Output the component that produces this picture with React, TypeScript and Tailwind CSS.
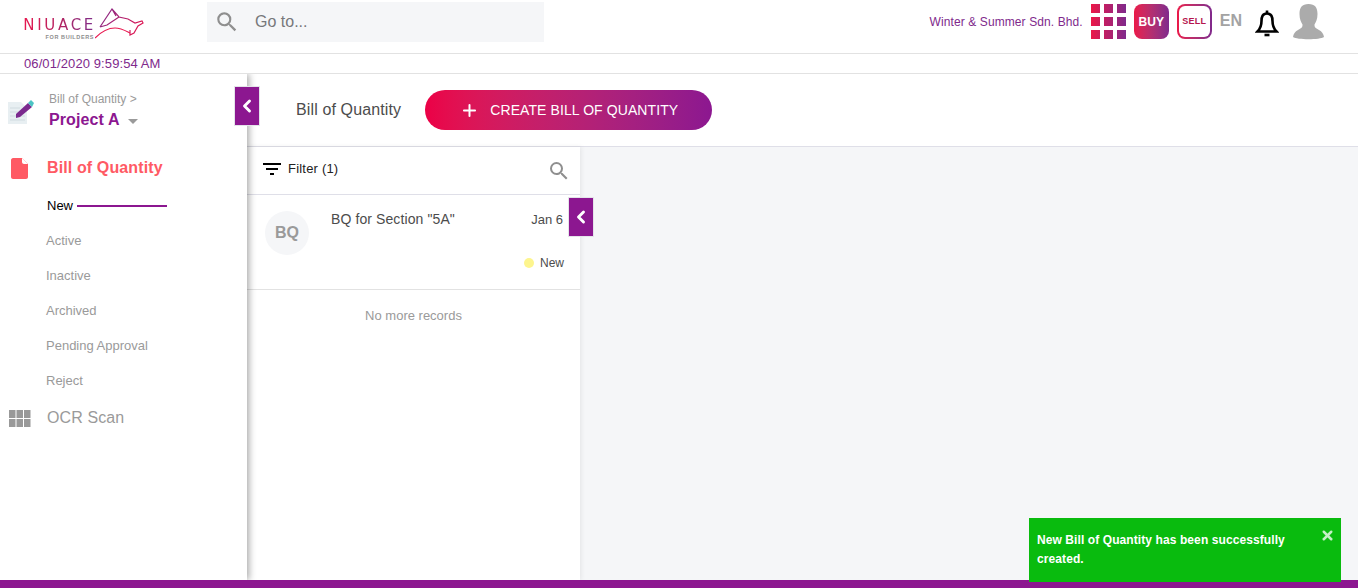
import { ChevronLeft, Plus, X } from "lucide-react";
import { MdSearch } from "react-icons/md";

const statuses = ["Active", "Inactive", "Archived", "Pending Approval", "Reject"];

function Logo() {
  return (
    <div className="flex items-start w-[120px] h-[40px] ml-[24px] mt-[8px]">
      <div className="flex flex-col items-end w-[70px] pt-[10px]">
        <span className="font-['DejaVu_Sans',sans-serif] text-[15px] leading-[14px] tracking-[2.7px] -mr-[2px] bg-gradient-to-r from-[#e8174f] via-[#b3205f] to-[#7d2a8c] bg-clip-text text-transparent">
          NIUACE
        </span>
        <span className="text-[5.5px] leading-[6px] mt-[2px] tracking-[0.6px] font-bold text-[#8d8d8d]">FOR BUILDERS</span>
      </div>
      <svg width="49" height="31" viewBox="0 0 49 31" fill="none" className="ml-[1px]">
        <defs>
          <linearGradient id="bull" gradientUnits="userSpaceOnUse" x1="5" y1="0" x2="45" y2="28">
            <stop offset="0" stopColor="#7d2a8c" />
            <stop offset="1" stopColor="#e8174f" />
          </linearGradient>
        </defs>
        <path d="M5 19 L17 1 L24 9 L33 11 L40 15 L47 13 L48 15 L43 18 L39 25 L35 27 L35 22 M24 9 L12 17 L5 19 M17 1 L21 8" stroke="url(#bull)" strokeWidth="1.2" />
        <path d="M0 30 C6 24 13 20 20 20 C26 20 31 23 35 25" stroke="#e8174f" strokeWidth="1.2" />
      </svg>
    </div>
  );
}

function GridIcon() {
  const cells = [0, 13, 26];
  return (
    <svg width="35" height="35" viewBox="0 0 35 35">
      <defs>
        <linearGradient id="grid" gradientUnits="userSpaceOnUse" x1="0" y1="0" x2="35" y2="0">
          <stop offset="0" stopColor="#eb1748" />
          <stop offset="1" stopColor="#80298c" />
        </linearGradient>
      </defs>
      {cells.map((y) =>
        cells.map((x) => <rect key={`${x}-${y}`} x={x} y={y} width="9" height="9" fill="url(#grid)" />)
      )}
    </svg>
  );
}

function BellIcon() {
  return (
    <svg width="24" height="27" viewBox="0 0 24 27" fill="none" stroke="#000" strokeWidth="2.6">
      <path d="M12 3.5 C7.5 3.5 6.5 7 6.5 11 C6.5 16 5 19 2.5 21.5 H21.5 C19 19 17.5 16 17.5 11 C17.5 7 16.5 3.5 12 3.5 Z" />
      <path d="M12 0.5 V3" />
      <path d="M9.5 25 H14.5" />
    </svg>
  );
}

function AvatarIcon() {
  return (
    <svg width="31" height="36" viewBox="0 0 31 36">
      <path
        d="M15.5 0 C22 0 24.5 3.5 24.5 10 C24.5 15 23 18 21.5 20.5 C21 23 23 24.5 26 26 C29 27.5 30.5 30 31 33 C27 36 4 36 0 33 C0.5 30 2 27.5 5 26 C8 24.5 10 23 9.5 20.5 C8 18 6.5 15 6.5 10 C6.5 3.5 9 0 15.5 0 Z"
        fill="#ababab"
      />
    </svg>
  );
}

function NoteIcon() {
  return (
    <svg width="27" height="27" viewBox="0 0 27 27">
      <path d="M1 3 H14 L20 9 V25 H1 Z" fill="#e8eff2" />
      <path d="M3 9 H13 M3 13 H15 M3 17 H18 M3 21 H18" stroke="#d0dbe0" strokeWidth="1" />
      <path d="M9 15 L21 4 L25 8 L13 18 L9 19 Z" fill="#7b2a8e" />
      <path d="M21 4 L24 1 L27 4 L25 8 Z" fill="#4cc4c4" />
    </svg>
  );
}

function FileIcon() {
  return (
    <svg width="17" height="21" viewBox="0 0 17 21">
      <path d="M2 0 H11 L17 6 V19 C17 20 16 21 15 21 H2 C1 21 0 20 0 19 V2 C0 1 1 0 2 0 Z" fill="#ff5a64" />
      <path d="M11 0 V4 C11 5 12 6 13 6 H17 Z" fill="#ffffff" />
    </svg>
  );
}

function OcrIcon() {
  const cols = [0, 7.5, 15];
  return (
    <svg width="22" height="17" viewBox="0 0 22 17">
      {[0, 9].map((y) => cols.map((x) => <rect key={`${x}-${y}`} x={x} y={y} width="6.5" height="8" fill="#999" />))}
    </svg>
  );
}

function FilterIcon() {
  return (
    <svg width="18" height="12" viewBox="0 0 18 12">
      <rect x="0" y="0" width="18" height="2" fill="#000" />
      <rect x="3" y="5" width="12" height="2" fill="#000" />
      <rect x="7" y="10" width="4" height="2" fill="#000" />
    </svg>
  );
}

function CollapseTab({ className }: { className: string }) {
  return (
    <button className={`absolute z-20 w-[26px] h-[40px] flex items-center justify-center bg-[#8c1790] border border-[#e4e4ea] ${className}`}>
      <ChevronLeft size={20} strokeWidth={3.5} color="#fff" />
    </button>
  );
}

export default function App() {
  return (
    <div className="relative w-[1358px] h-[588px] overflow-hidden bg-white font-['Liberation_Sans',Arial,sans-serif]">
      <header className="h-[54px] flex border-b border-[#e2e2e2]">
        <Logo />
        <div className="ml-[63px] mt-[2px] w-[337px] h-[40px] bg-[#f5f6f8] flex items-center pl-[7px]">
          <MdSearch size={26} color="#8f8f8f" />
          <span className="ml-[15px] text-[16px] text-[#77787b]">Go to...</span>
        </div>
        <div className="ml-auto flex items-start pt-[4px] pr-[34px]">
          <span className="text-[12px] leading-[14px] mt-[11px] mr-[8px] tracking-[0.1px] text-[#80298c]">Winter &amp; Summer Sdn. Bhd.</span>
          <GridIcon />
          <div className="ml-[8px] w-[35px] h-[35px] rounded-[8px] bg-gradient-to-r from-[#eb1748] to-[#80298c] flex items-center justify-center text-[12px] font-bold text-white">
            BUY
          </div>
          <div className="ml-[8px] w-[35px] h-[35px] rounded-[8px] p-[2px] bg-gradient-to-r from-[#eb1748] to-[#80298c]">
            <div className="w-full h-full rounded-[6px] bg-white flex items-center justify-center text-[9px] font-bold tracking-[0.2px] text-[#b5154f]">
              SELL
            </div>
          </div>
          <span className="ml-[8px] mt-[8px] text-[16px] leading-[18px] font-bold text-[#a3a3a3]">EN</span>
          <div className="ml-[13px] mt-[6px]">
            <BellIcon />
          </div>
          <div className="ml-[14px]">
            <AvatarIcon />
          </div>
        </div>
      </header>

      <div className="h-[20px] pl-[24px] border-b border-[#e2e2e2] text-[13px] leading-[19px] tracking-[0.1px] text-[#80298c]">
        06/01/2020 9:59:54 AM
      </div>

      <div className="flex h-[506px] overflow-hidden">
        <aside className="relative z-10 w-[247px] shrink-0 bg-white shadow-[2px_0_7px_rgba(0,0,0,0.35)]">
          <div className="flex pt-[18px] pl-[7px]">
            <div className="mt-[7px]">
              <NoteIcon />
            </div>
            <div className="ml-[15px]">
              <div className="text-[12px] leading-[14px] text-[#9a9a9a]">Bill of Quantity &gt;</div>
              <div className="flex items-center mt-[5px] text-[16px] leading-[18px] tracking-[0.1px] font-bold text-[#8c1790]">
                Project A
                <span className="ml-[8px] mt-[2px] w-0 h-0 border-x-[5px] border-x-transparent border-t-[5px] border-t-[#9a9a9a]" />
              </div>
            </div>
          </div>
          <div className="flex items-center mt-[28px] pl-[11px] h-[22px]">
            <FileIcon />
            <span className="ml-[19px] text-[16px] tracking-[0.12px] font-bold text-[#ff5a64]">Bill of Quantity</span>
          </div>
          <div className="pl-[46px] mt-[19px] flex flex-col text-[13px]">
            <div className="h-[35px] flex items-start pl-[1px]">
              <span className="leading-[16px] text-black">New</span>
              <span className="ml-[4px] mt-[7px] w-[90px] h-[2px] bg-[#8c1790]" />
            </div>
            {statuses.map((s) => (
              <div key={s} className="h-[35px] leading-[16px] text-[#9a9a9a]">
                {s}
              </div>
            ))}
          </div>
          <div className="flex items-center pl-[9px]">
            <OcrIcon />
            <span className="ml-[16px] text-[16px] leading-[20px] tracking-[0.1px] text-[#9a9a9a]">OCR Scan</span>
          </div>
        </aside>

        <main className="flex-1 flex flex-col bg-[#f5f6f8]">
          <div className="h-[73px] shrink-0 bg-white border-b border-[#dfdfe8] flex items-center pl-[49px]">
            <span className="text-[16px] tracking-[0.13px] text-[#4c4c4c]">Bill of Quantity</span>
            <button className="ml-[24px] w-[287px] h-[40px] rounded-full bg-gradient-to-r from-[#ec0046] to-[#8c1790] flex items-center pl-[35px] text-white">
              <Plus size={19} strokeWidth={2.5} />
              <span className="ml-[11px] text-[14px] tracking-[0.09px]">CREATE BILL OF QUANTITY</span>
            </button>
          </div>
          <div className="flex-1 flex min-h-0">
            <section className="w-[333px] bg-white shadow-[1px_0_5px_rgba(0,0,0,0.08)]">
              <div className="h-[48px] flex items-center pl-[16px] pr-[9px] border-b border-[#dfdfe8]">
                <div className="flex items-center pb-[4px]">
                  <FilterIcon />
                  <span className="ml-[7px] text-[13px] tracking-[0.2px] text-[#222]">Filter (1)</span>
                </div>
                <MdSearch size={24} color="#8f8f8f" className="ml-auto" />
              </div>
              <div className="h-[95px] flex pl-[18px] pr-[16px] border-b border-[#e2e2e2]">
                <div className="mt-[16px] w-[44px] h-[44px] rounded-full bg-[#f5f6f8] flex items-center justify-center text-[16px] font-bold text-[#9a9a9a]">
                  BQ
                </div>
                <div className="ml-[22px] flex-1 flex flex-col">
                  <div className="flex justify-between mt-[16px]">
                    <span className="text-[14px] leading-[16px] tracking-[0.1px] text-[#4c4c4c]">BQ for Section "5A"</span>
                    <span className="text-[13px] leading-[18px] mr-[1px] text-[#4c4c4c]">Jan 6</span>
                  </div>
                  <div className="flex items-center justify-end mt-[27px]">
                    <span className="w-[10px] h-[10px] rounded-full bg-[#fdf58e]" />
                    <span className="ml-[6px] text-[12px] leading-[14px] text-[#4c4c4c]">New</span>
                  </div>
                </div>
              </div>
              <div className="mt-[18px] text-center text-[13px] leading-[16px] text-[#9a9a9a]">No more records</div>
            </section>
          </div>
        </main>
      </div>

      <CollapseTab className="left-[234px] top-[86px]" />
      <CollapseTab className="left-[568px] top-[197px]" />

      <div className="absolute left-0 right-0 bottom-0 h-[8px] z-20 bg-[#8c1790]" />

      <div className="absolute z-30 left-[1029px] top-[518px] w-[312px] h-[64px] bg-[#09bb0e] pl-[8px] pr-[10px] pt-[13px] text-[12px] leading-[19px] tracking-[0.09px] font-bold text-white">
        <p className="w-[270px]">New Bill of Quantity has been successfully created.</p>
        <X size={15} strokeWidth={4} className="absolute right-[6px] top-[10px] text-[#c5efc6]" />
      </div>
    </div>
  );
}
